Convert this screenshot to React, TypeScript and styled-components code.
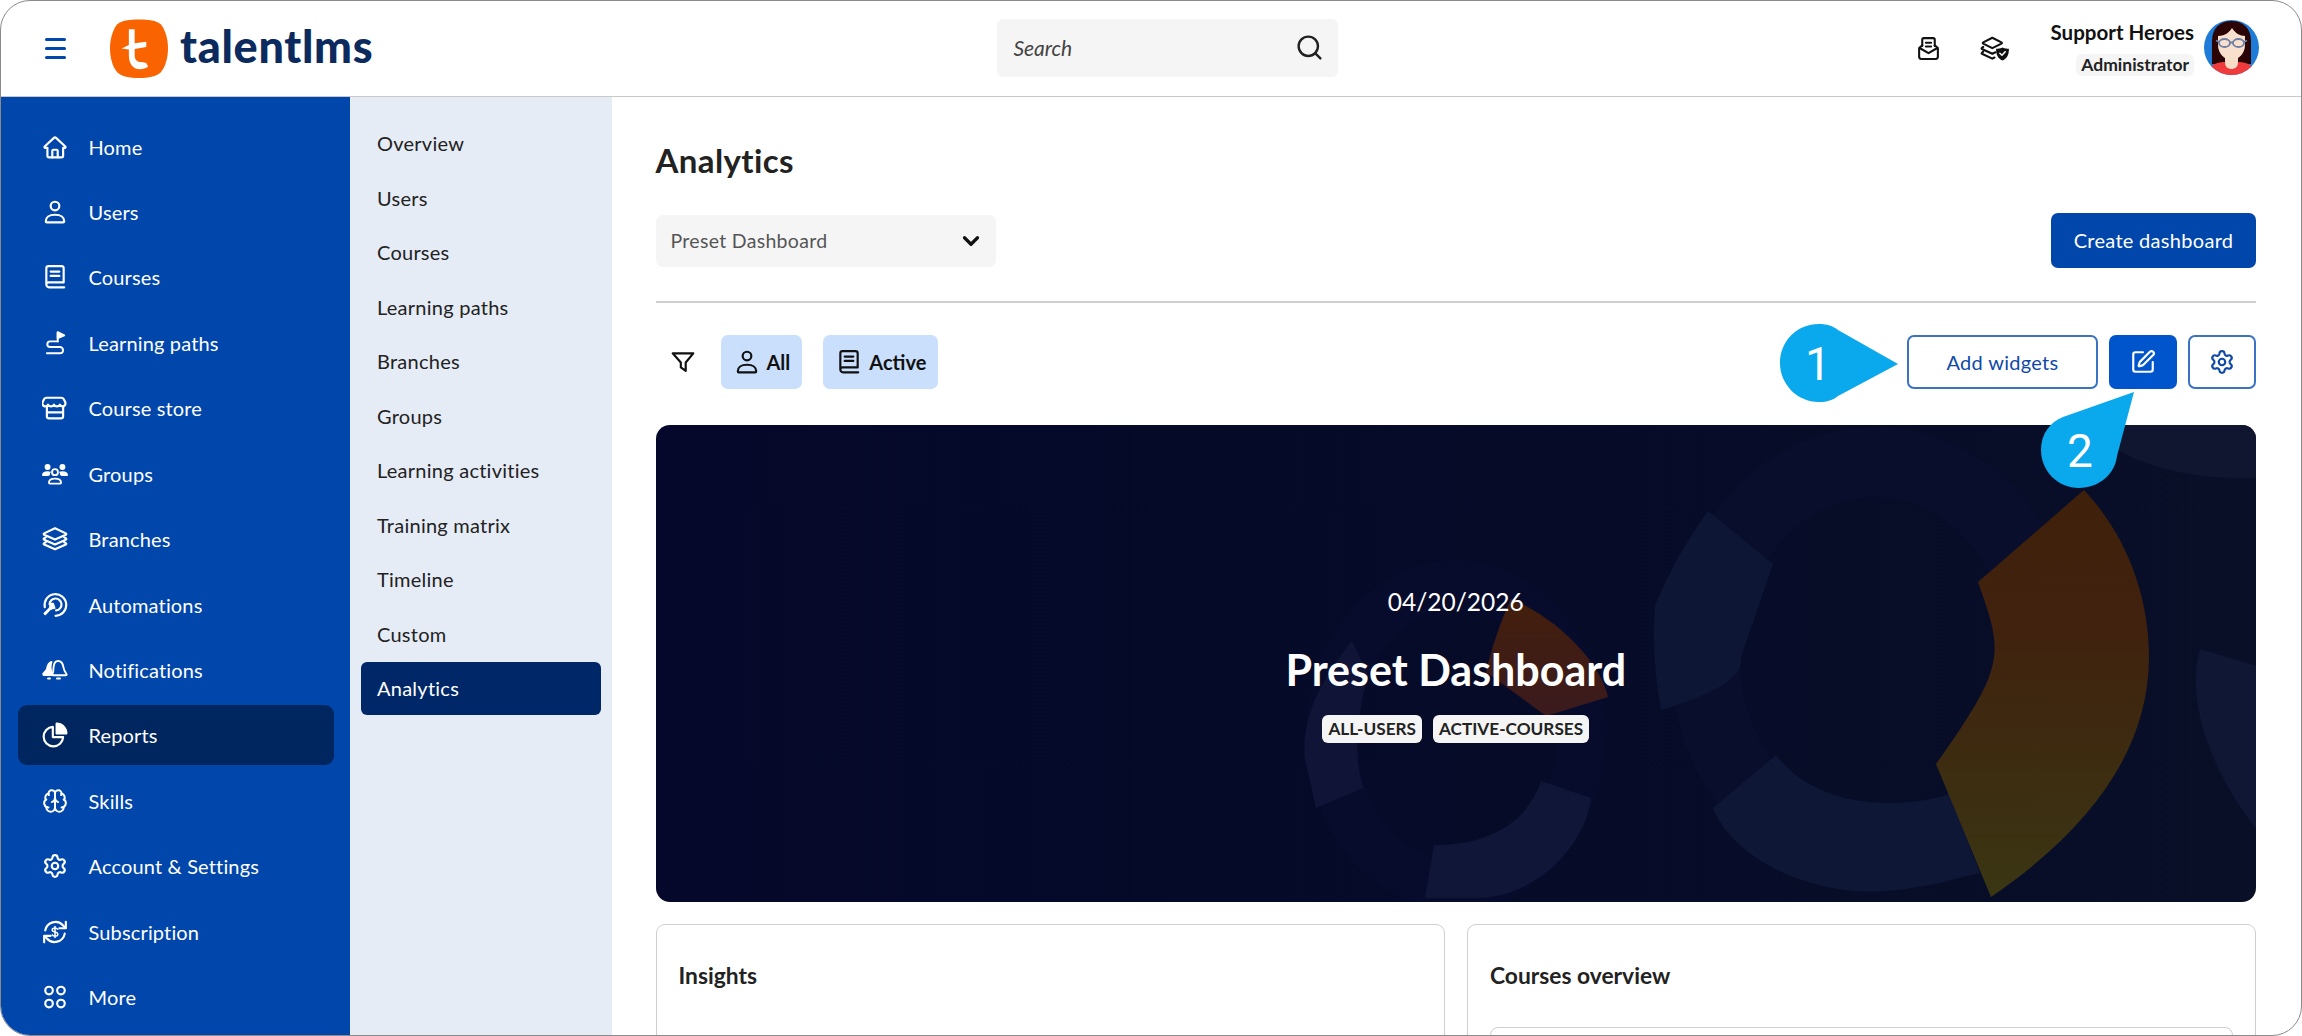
import React from "react";
import styled, { createGlobalStyle } from "styled-components";
import { Search, Settings, SquarePen, ChevronDown, Brain } from "lucide-react";

const FONT = `"Lato", "Open Sans", sans-serif`;

const GlobalStyle = createGlobalStyle`
  html, body {
    margin: 0;
    padding: 0;
    background: #fff;
    overflow: hidden;
  }
  * {
    box-sizing: border-box;
  }
`;

const Frame = styled.div`
  width: 2302px;
  height: 1036px;
  display: flex;
  flex-direction: column;
  border: 1px solid #8a8a8a;
  border-radius: 30px;
  overflow: hidden;
  background: #fff;
  font-family: ${FONT};
  color: #222;
`;

const Header = styled.header`
  height: 96px;
  flex: none;
  display: flex;
  align-items: center;
  border-bottom: 1px solid #c9c9c9;
  padding: 0 42px 0 44px;
`;

const Burger = styled.div`
  width: 21px;
  display: flex;
  flex-direction: column;
  gap: 6px;
  span {
    display: block;
    height: 3px;
    border-radius: 2px;
    background: #0046ab;
  }
`;

const Brand = styled.div`
  display: flex;
  align-items: center;
  gap: 12px;
  margin-left: 44px;
`;

const LogoWord = styled.span`
  font-size: 45px;
  font-weight: 900;
  color: #0b2a5e;
  letter-spacing: 0.7px;
  line-height: 1;
  margin-top: -4px;
`;

const SearchBox = styled.div`
  width: 341px;
  height: 58px;
  margin-left: 624px;
  margin-top: -2px;
  display: flex;
  align-items: center;
  justify-content: space-between;
  padding: 0 14px 0 16px;
  background: #f5f5f5;
  border-radius: 6px;
  font-size: 21px;
  font-style: italic;
  color: #444;
  svg {
    color: #222;
  }
`;

const HeaderIcons = styled.div`
  display: flex;
  align-items: center;
  gap: 39px;
  margin-left: auto;
  color: #111;
`;

const Profile = styled.div`
  display: flex;
  flex-direction: column;
  align-items: flex-end;
  gap: 11px;
  margin-left: 41px;
`;

const ProfileName = styled.div`
  font-size: 20.5px;
  font-weight: 700;
  color: #111;
  line-height: 22px;
`;

const RoleChip = styled.div`
  height: 22px;
  padding: 0 5px;
  background: #f5f5f5;
  border-radius: 6px;
  font-size: 17.5px;
  font-weight: 700;
  color: #222;
  line-height: 22px;
`;

const AvatarWrap = styled.div`
  margin-left: 10px;
  margin-top: -2px;
  line-height: 0;
`;

const Body = styled.div`
  flex: 1;
  min-height: 0;
  display: flex;
`;

const Sidebar = styled.nav`
  width: 349px;
  flex: none;
  background: #0046ab;
  padding: 19.5px 16px 0 17px;
  display: flex;
  flex-direction: column;
  gap: 5.45px;
`;

const NavItem = styled.div<{ $active?: boolean }>`
  height: 60px;
  flex: none;
  display: flex;
  align-items: center;
  gap: 20.5px;
  padding-left: 24px;
  border-radius: 9px;
  background: ${(p) => (p.$active ? "#00265f" : "transparent")};
  color: #fff;
  font-size: 20px;
  letter-spacing: 0.15px;
`;

const IconSlot = styled.span`
  width: 26px;
  height: 26px;
  flex: none;
  display: flex;
  align-items: center;
  justify-content: center;
`;

const SubNav = styled.nav`
  width: 262px;
  flex: none;
  background: #e6ecf6;
  padding: 19.5px 11px 0 11px;
  display: flex;
  flex-direction: column;
  gap: 1.5px;
`;

const SubItem = styled.div<{ $active?: boolean }>`
  height: 53px;
  flex: none;
  display: flex;
  align-items: center;
  padding-left: 16px;
  border-radius: 6px;
  background: ${(p) => (p.$active ? "#002868" : "transparent")};
  color: ${(p) => (p.$active ? "#fff" : "#222")};
  font-size: 20px;
  letter-spacing: 0.25px;
`;

const Main = styled.main`
  flex: 1;
  min-width: 0;
  padding: 43px 45px 0 43.5px;
  display: flex;
  flex-direction: column;
`;

const Title = styled.h1`
  margin: 0 0 33px;
  height: 40px;
  font-size: 33px;
  line-height: 40px;
  font-weight: 700;
  letter-spacing: 0.4px;
  color: #222;
`;

const TopRow = styled.div`
  display: flex;
  align-items: center;
  justify-content: space-between;
  height: 55px;
  flex: none;
`;

const DashSelect = styled.div`
  width: 340px;
  height: 52px;
  display: flex;
  align-items: center;
  justify-content: space-between;
  padding: 0 12px 0 15px;
  background: #f5f5f5;
  border-radius: 7px;
  font-size: 19.5px;
  letter-spacing: 0.3px;
  color: #555;
  svg {
    color: #111;
  }
`;

const PrimaryButton = styled.div`
  width: 205px;
  height: 55px;
  display: flex;
  align-items: center;
  justify-content: center;
  padding-bottom: 2px;
  background: #0046ab;
  border-radius: 7px;
  color: #fff;
  font-size: 20px;
  letter-spacing: 0.3px;
`;

const Divider = styled.div`
  height: 2px;
  flex: none;
  margin: 33px 0 32px;
  background: #cfcfcf;
`;

const Toolbar = styled.div`
  position: relative;
  height: 54px;
  flex: none;
  display: flex;
  align-items: center;
`;

const FilterIcon = styled.span`
  width: 26px;
  margin-left: 14px;
  margin-right: 25px;
  display: flex;
  color: #111;
`;

const FilterChip = styled.div`
  height: 54px;
  display: flex;
  align-items: center;
  gap: 7px;
  padding: 0 12px 0 13px;
  margin-right: 21px;
  border-radius: 7px;
  background: #c9dffc;
  font-size: 20px;
  font-weight: 700;
  color: #111;
`;

const ToolButtons = styled.div`
  margin-left: auto;
  display: flex;
  gap: 11px;
`;

const OutlineButton = styled.div<{ $wide?: boolean; $filled?: boolean }>`
  width: ${(p) => (p.$wide ? "191px" : "68px")};
  height: 54px;
  display: flex;
  align-items: center;
  justify-content: center;
  border-radius: 7px;
  border: 2px solid ${(p) => (p.$filled ? "#0055cc" : "#3a72c4")};
  background: ${(p) => (p.$filled ? "#0055cc" : "#fff")};
  color: ${(p) => (p.$filled ? "#fff" : "#0f4aa8")};
  font-size: 20px;
  letter-spacing: 0.3px;
`;

const Callout = styled.svg<{ $left: number; $top: number }>`
  position: absolute;
  left: ${(p) => p.$left}px;
  top: ${(p) => p.$top}px;
  z-index: 3;
`;

const Banner = styled.section`
  position: relative;
  height: 477px;
  flex: none;
  margin-top: 36px;
  border-radius: 14px;
  overflow: hidden;
  background: linear-gradient(90deg, #05082a 0%, #060b28 55%, #090f27 100%);
  display: flex;
  flex-direction: column;
  align-items: center;
`;

const BannerArt = styled.svg`
  position: absolute;
  inset: 0;
`;

const BannerDate = styled.div`
  position: relative;
  margin-top: 162px;
  height: 30px;
  font-size: 24.5px;
  line-height: 30px;
  color: #fff;
`;

const BannerTitle = styled.div`
  position: relative;
  margin-top: 28px;
  height: 50px;
  font-size: 43px;
  line-height: 50px;
  font-weight: 700;
  color: #fff;
`;

const TagRow = styled.div`
  position: relative;
  margin-top: 20px;
  display: flex;
  gap: 11px;
`;

const Tag = styled.span`
  height: 28px;
  padding: 0 6px;
  border-radius: 6px;
  background: #f5f5f5;
  color: #222;
  font-size: 17.2px;
  font-weight: 700;
  line-height: 28px;
`;

const CardGrid = styled.div`
  display: grid;
  grid-template-columns: 789px 789px;
  justify-content: space-between;
  gap: 22px;
  margin-top: 22px;
  flex: 1;
  min-height: 0;
`;

const Card = styled.div`
  height: 300px;
  border: 1.5px solid #cfcfcf;
  border-radius: 9px;
  padding: 34px 22px 0;
`;

const CardTitle = styled.div`
  height: 32px;
  font-size: 22.8px;
  line-height: 32px;
  font-weight: 700;
  color: #222;
`;

const InnerBox = styled.div`
  height: 200px;
  margin-top: 36px;
  border: 1.5px solid #cfcfcf;
  border-radius: 8px;
`;

type IconProps = { size?: number };

const Stroke: React.FC<React.PropsWithChildren<IconProps & { sw?: number }>> = ({ size = 26, sw = 2, children }) => (
  <svg
    width={size}
    height={size}
    viewBox="0 0 24 24"
    fill="none"
    stroke="currentColor"
    strokeWidth={sw}
    strokeLinecap="round"
    strokeLinejoin="round"
  >
    {children}
  </svg>
);

const HomeIcon = () => (
  <Stroke>
    <path d="M2.5 11.5 11 3.6a1.5 1.5 0 0 1 2 0l8.5 7.9c.5.5.2 1.3-.5 1.3h-1.5V20a1.5 1.5 0 0 1-1.5 1.5H6.500A1.500 1.500 0 0 1 5 20v-7.200H3c-.7 0-1-.8-.5-1.300Z" />
    <path d="M9.500 21.500v-6a1 1 0 0 1 1-1h3a1 1 0 0 1 1 1v6" />
  </Stroke>
);

const UserIcon: React.FC<IconProps> = ({ size }) => (
  <Stroke size={size}>
    <circle cx="12" cy="6.500" r="4" />
    <path d="M3.500 20.500c0-3.500 3-6 8.500-6s8.500 2.500 8.500 6c0 .6-.4 1-1 1h-15c-.6 0-1-.4-1-1Z" />
  </Stroke>
);

const BookIcon: React.FC<IconProps> = ({ size }) => (
  <Stroke size={size}>
    <path d="M4 19V4a2 2 0 0 1 2-2h12a2 2 0 0 1 2 2v13H6a2 2 0 0 0-2 2 2.500 2.500 0 0 0 2.500 2.500H20.500" />
    <path d="M8 7h8M8 11h8" />
  </Stroke>
);

const PathIcon = () => (
  <Stroke sw={1.8}>
    <path d="M14.500 10.500V2.500" />
    <path d="M14.500 2l6 3-6 2.500Z" fill="currentColor" />
    <path d="M14.500 10.500H7.500a2.600 2.600 0 0 0 0 5.200h9a2.800 2.800 0 0 1 0 5.800H4.500" />
  </Stroke>
);

const StoreIcon = () => (
  <Stroke>
    <path d="M6 2.500h12c1 0 1.500.4 2 1.200l1.500 3c.6 2.300-.8 3.800-2.500 3.800-1.200 0-2-.6-2.500-1.500-.5.9-1.500 1.500-2.700 1.500-1.200 0-2.300-.6-2.800-1.500-.5.9-1.500 1.500-2.700 1.500-1.200 0-2.300-.6-2.800-1.500-.5.9-1.300 1.500-2.500 1.500-1.700 0-3.100-1.500-2.500-3.800l1.500-3c.5-.8 1-1.200 2-1.200Z" />
    <path d="M4.500 11v8.500a2 2 0 0 0 2 2h11a2 2 0 0 0 2-2V11M4.500 16h15" />
  </Stroke>
);

const GroupsIcon = () => (
  <svg width="28" height="26" viewBox="0 0 28 24" fill="none" stroke="currentColor" strokeWidth="2" strokeLinejoin="round">
    <circle cx="14" cy="10" r="3.200" />
    <path d="M7.500 21.500c0-2.800 2.500-4.500 6.500-4.500s6.500 1.700 6.500 4.500c0 .5-.3.8-.8.8H8.300c-.5 0-.8-.3-.8-.8Z" />
    <g fill="currentColor" stroke="none">
      <circle cx="6" cy="4.500" r="3.200" />
      <circle cx="22" cy="4.500" r="3.200" />
      <path d="M0 13.200c0-2.700 2.300-4.200 6-4.200 1.500 0 2.700.3 3.600.7-.8 1-1.100 2.200-1 3.500-.7.300-1.300.5-2 1H.8c-.5 0-.8-.4-.8-1Z" />
      <path d="M28 13.200c0-2.700-2.300-4.200-6-4.200-1.500 0-2.700.3-3.600.7.800 1 1.100 2.200 1 3.500.7.300 1.300.5 2 1h5.800c.5 0 .8-.4.8-1Z" />
    </g>
  </svg>
);

const BranchesIcon = () => (
  <Stroke>
    <path d="M12 2 22 6.800c.6.300.6 1 0 1.300L12 12.500 2 8.100c-.6-.3-.6-1 0-1.300Z" />
    <path d="M3.500 10.500 2 11.300c-.6.3-.6 1 0 1.300L12 17l10-4.400c.6-.3.6-1 0-1.300l-1.500-.8" />
    <path d="M3.500 15 2 15.800c-.6.3-.6 1 0 1.300L12 21.500l10-4.400c.6-.3.6-1 0-1.300L20.500 15" />
  </Stroke>
);

const AutomationIcon = () => (
  <Stroke>
    <path d="M2.600 14A10 10 0 1 1 12.500 22" />
    <path d="M7 11.500A5.500 5.500 0 1 1 13 17" />
    <path d="M10.500 10.500 12 15l-2.200.5-2 .6L3 21l-1.200-1.200 4.900-4.900.7-2.300.5-2.100Z" fill="currentColor" strokeWidth="1" />
  </Stroke>
);

const NotifyIcon = () => (
  <svg width="26" height="26" viewBox="0 0 26 24" fill="none" stroke="currentColor" strokeWidth="1.900" strokeLinejoin="round" strokeLinecap="round">
    <path
      d="M9.500 4C6.500 5 5.500 8 5 11c-.3 1.600-2 3-3.500 4.500-.5.500-.2 1.500.5 1.500h8.500C8.500 13 8 8 9.500 4Z"
      fill="currentColor"
    />
    <path d="M16 3c3.500 0 5 3 5.500 6.500.3 2.500 1.500 4.500 3 6.500.4.500 0 1.200-.6 1.200H11c-.6 0-1-.7-.6-1.200 1.100-1.800 1-4.500 1.100-6.500C11.800 6 13 3 16 3Z" />
    <path d="M15 20.500h3" />
    <path d="M6 20.500h2" />
  </svg>
);

const PieIcon = () => (
  <Stroke>
    <path d="M10 4.500a9 9 0 1 0 9.500 9.500H10Z" />
    <path d="M13.500 1.500a9 9 0 0 1 9 9h-9Z" fill="currentColor" />
  </Stroke>
);

const SubscriptionIcon = () => (
  <Stroke>
    <path d="M3 10.500A9.500 9.500 0 0 1 19.500 6l2 2" />
    <path d="M22 2.500V8.500h-6" />
    <path d="M21 13.500A9.500 9.500 0 0 1 4.500 18l-2-2" />
    <path d="M2 21.500V15.500h6" />
    <path d="M14.500 9.500c-.5-.8-1.400-1.200-2.500-1.200-1.500 0-2.600.7-2.600 1.800 0 2.600 5.200 1.300 5.200 3.900 0 1.100-1.100 1.800-2.600 1.800-1.100 0-2-.4-2.500-1.200M12 7v10" strokeWidth="1.400" />
  </Stroke>
);

const MoreIcon = () => (
  <Stroke>
    <circle cx="6.500" cy="6" r="3.500" />
    <circle cx="17.500" cy="6" r="3.500" />
    <circle cx="6.500" cy="18" r="3.500" />
    <circle cx="17.500" cy="18" r="3.500" />
  </Stroke>
);

const InboxIcon = () => (
  <Stroke size={25}>
    <path d="M6 9.500V3.500a1.500 1.500 0 0 1 1.500-1.500h9A1.500 1.500 0 0 1 18 3.500v6" />
    <path d="M9.500 6.500h5M9.500 10h5" />
    <path d="M6 9 3.500 11c-.4.300-.5.700-.5 1.200V20a2 2 0 0 0 2 2h14a2 2 0 0 0 2-2v-7.800c0-.5-.1-.9-.5-1.200L18 9" />
    <path d="M3.500 11.500 12 16.500l8.500-5" />
  </Stroke>
);

const LayersCheckIcon = () => (
  <svg width="30" height="26" viewBox="0 0 28 24" fill="none" stroke="currentColor" strokeWidth="2" strokeLinejoin="round" strokeLinecap="round">
    <path d="M11.500 1.500 20 5.800c.5.300.5.900 0 1.200l-8.500 4.200L3 7c-.5-.3-.5-.9 0-1.200Z" />
    <path d="M3 10 1.800 11c-.4.300-.4.800 0 1l9.700 4.500 3-1.400" />
    <path d="M3 14.500 1.800 15.500c-.4.300-.4.800 0 1l9.700 4.500 2-1" />
    <path d="M21 10.500c2.500 1 4 1.300 6 1.300 0 5.500-1.500 9-6 11-4.500-2-6-5.500-6-11 2 0 3.500-.3 6-1.300Z" fill="currentColor" stroke="none" />
    <path d="M18.500 16l2 1.800 3-3.300" stroke="#fff" strokeWidth="1.400" />
  </svg>
);

const FunnelIcon = () => (
  <Stroke size={26}>
    <path d="M2.500 4h19l-7 8.500v7.800L10 17v-4.500Z" />
  </Stroke>
);

const LogoMark = () => (
  <svg width="58" height="61" viewBox="0 0 60 62">
    <path
      d="M30 1C40 1 48 2 52.500 6 57.500 12 60 22 60 31 60 40 57.500 50 52.500 55.500 48 60 40 61.500 30 61.500 20 61.500 12 60 7.500 55.500 2.500 50 0 40 0 31 0 22 2.500 12 7.500 6 12 2 20 1 30 1Z"
      fill="#fa6400"
    />
    <path
      d="M19.500 11H25.500V25.500L37.500 24V29.500L25.500 31.500V38C25.500 43 28 45 33 45L37.500 46L39.500 50C36 52 33 52.500 31 52.500C23 52.500 19.500 46 19.500 38V32L12 31L19.500 27.500Z"
      fill="#fff"
    />
  </svg>
);

const Avatar = () => (
  <svg width="55" height="55" viewBox="0 0 55 55">
    <defs>
      <clipPath id="avatar-clip">
        <circle cx="27.500" cy="27.500" r="27.500" />
      </clipPath>
    </defs>
    <g clipPath="url(#avatar-clip)">
      <rect width="55" height="55" fill="#1f7bd8" />
      <path d="M8 44V21C8 8 16 1 27.500 1S47 8 47 21V44Z" fill="#2b0505" />
      <path d="M0 55C3 47 10 43 19 42H36C45 43 52 47 55 55Z" fill="#ef3b3b" />
      <path d="M21 36H34V42C34 47 31 49 27.500 49S21 47 21 42Z" fill="#f7dcc6" />
      <path d="M14 16C20 16 25 13 28 8 31 13 36 16 41 16V25C41 33 35 40 27.500 40S14 33 14 25Z" fill="#f9e0cc" />
      <g fill="none" stroke="#6c7fa8" strokeWidth="1.800">
        <ellipse cx="20.500" cy="23" rx="5.500" ry="4" />
        <ellipse cx="34.500" cy="23" rx="5.500" ry="4" />
        <path d="M26 22.500h3M15 22l-3-1.500M40 22l3-1.500" />
      </g>
    </g>
  </svg>
);

const nav: { label: string; icon: React.ReactNode; active?: boolean }[] = [
  { label: "Home", icon: <HomeIcon /> },
  { label: "Users", icon: <UserIcon /> },
  { label: "Courses", icon: <BookIcon /> },
  { label: "Learning paths", icon: <PathIcon /> },
  { label: "Course store", icon: <StoreIcon /> },
  { label: "Groups", icon: <GroupsIcon /> },
  { label: "Branches", icon: <BranchesIcon /> },
  { label: "Automations", icon: <AutomationIcon /> },
  { label: "Notifications", icon: <NotifyIcon /> },
  { label: "Reports", icon: <PieIcon />, active: true },
  { label: "Skills", icon: <Brain size={26} strokeWidth={1.8} /> },
  { label: "Account & Settings", icon: <Settings size={26} strokeWidth={2} /> },
  { label: "Subscription", icon: <SubscriptionIcon /> },
  { label: "More", icon: <MoreIcon /> },
];

const subNav = [
  "Overview",
  "Users",
  "Courses",
  "Learning paths",
  "Branches",
  "Groups",
  "Learning activities",
  "Training matrix",
  "Timeline",
  "Custom",
  "Analytics",
];

// coordinates are px inside the 1601x478 banner
const BannerShapes = () => (
  <BannerArt width="1601" height="478" viewBox="0 0 1601 478">
    <defs>
      <linearGradient id="big-seg" x1="0" y1="0" x2="0" y2="1">
        <stop offset="0" stopColor="#3f200b" />
        <stop offset="0.35" stopColor="#40220e" />
        <stop offset="1" stopColor="#3a3613" />
      </linearGradient>
      <linearGradient id="small-seg" x1="0" y1="0" x2="0" y2="1">
        <stop offset="0" stopColor="#431f0c" />
        <stop offset="1" stopColor="#3b1a1e" />
      </linearGradient>
    </defs>
    <ellipse cx="1219" cy="232" rx="170" ry="195" fill="none" stroke="#090e2c" strokeWidth="70" />
    <ellipse cx="800" cy="310" rx="125" ry="150" fill="none" stroke="#080c2c" strokeWidth="50" />
    <path d="M1052 86 1117 139Q1085 232 1085 232 1090 260 1005 285 995 232 999 180 1020 130 1052 86Z" fill="#0e1636" />
    <path d="M1120 330 1057 383C1075 430 1150 472 1230 466 1280 462 1310 450 1324 448L1293 369C1270 378 1170 395 1120 330Z" fill="#0f1737" />
    <path d="M1428 65 1322 157C1348 230 1350 240 1280 339L1335 472C1440 400 1493 320 1493 232 1493 170 1470 110 1428 65Z" fill="url(#big-seg)" />
    <path d="M1463 0H1601V53C1530 55 1490 40 1463 26Z" fill="#10162f" />
    <path d="M1544 224 1601 241V405C1550 340 1530 270 1544 224Z" fill="#0f1735" />
    <path d="M696 216C660 260 645 300 649 334L660 383 707 363C700 340 698 300 712 250Z" fill="#101437" />
    <path d="M885 356 935 373C930 420 880 472 822 473H769L778 420C830 420 870 400 885 356Z" fill="#0f1638" />
    <path d="M855 174C905 195 945 240 952 272L890 291 830 247C835 225 845 195 855 174Z" fill="url(#small-seg)" />
  </BannerArt>
);

const App: React.FC = () => (
  <>
    <GlobalStyle />
    <Frame>
      <Header>
        <Burger>
          <span />
          <span />
          <span />
        </Burger>
        <Brand>
          <LogoMark />
          <LogoWord>talentlms</LogoWord>
        </Brand>
        <SearchBox>
          Search
          <Search size={29} strokeWidth={2} />
        </SearchBox>
        <HeaderIcons>
          <InboxIcon />
          <LayersCheckIcon />
        </HeaderIcons>
        <Profile>
          <ProfileName>Support Heroes</ProfileName>
          <RoleChip>Administrator</RoleChip>
        </Profile>
        <AvatarWrap>
          <Avatar />
        </AvatarWrap>
      </Header>
      <Body>
        <Sidebar>
          {nav.map((item) => (
            <NavItem key={item.label} $active={item.active}>
              <IconSlot>{item.icon}</IconSlot>
              {item.label}
            </NavItem>
          ))}
        </Sidebar>
        <SubNav>
          {subNav.map((label) => (
            <SubItem key={label} $active={label === "Analytics"}>
              {label}
            </SubItem>
          ))}
        </SubNav>
        <Main>
          <Title>Analytics</Title>
          <TopRow>
            <DashSelect>
              Preset Dashboard
              <ChevronDown size={26} strokeWidth={3} />
            </DashSelect>
            <PrimaryButton>Create dashboard</PrimaryButton>
          </TopRow>
          <Divider />
          <Toolbar>
            <FilterIcon>
              <FunnelIcon />
            </FilterIcon>
            <FilterChip>
              <UserIcon size={26} />
              All
            </FilterChip>
            <FilterChip>
              <BookIcon size={26} />
              Active
            </FilterChip>
            <ToolButtons>
              <OutlineButton $wide>Add widgets</OutlineButton>
              <OutlineButton $filled>
                <SquarePen size={26} strokeWidth={2} />
              </OutlineButton>
              <OutlineButton>
                <Settings size={26} strokeWidth={2} />
              </OutlineButton>
            </ToolButtons>
            <Callout $left={1124} $top={-11} width="118" height="78" viewBox="0 0 118 78">
              <path
                d="M39 0C47 0 53 2 58 6L118 40 58 72C53 76 47 78 39 78 17 78 0 60 0 39 0 17 17 0 39 0Z"
                fill="#0aa8ec"
              />
              <text x="38" y="56" fontFamily="Roboto, sans-serif" fontSize="46" fontWeight="400" fill="#fff" textAnchor="middle">
                1
              </text>
            </Callout>
            <Callout $left={1385} $top={57} width="93" height="96" viewBox="0 0 93 96">
              <path
                d="M93 0 76 64C74 82 58 96 38 96 17 96 0 79 0 58 0 42 9 30 22 25Z"
                fill="#0aa8ec"
              />
              <text x="39" y="75" fontFamily="Roboto, sans-serif" fontSize="46" fontWeight="400" fill="#fff" textAnchor="middle">
                2
              </text>
            </Callout>
          </Toolbar>
          <Banner>
            <BannerShapes />
            <BannerDate>04/20/2026</BannerDate>
            <BannerTitle>Preset Dashboard</BannerTitle>
            <TagRow>
              <Tag>ALL-USERS</Tag>
              <Tag>ACTIVE-COURSES</Tag>
            </TagRow>
          </Banner>
          <CardGrid>
            <Card>
              <CardTitle>Insights</CardTitle>
            </Card>
            <Card>
              <CardTitle>Courses overview</CardTitle>
              <InnerBox />
            </Card>
          </CardGrid>
        </Main>
      </Body>
    </Frame>
  </>
);

export default App;
